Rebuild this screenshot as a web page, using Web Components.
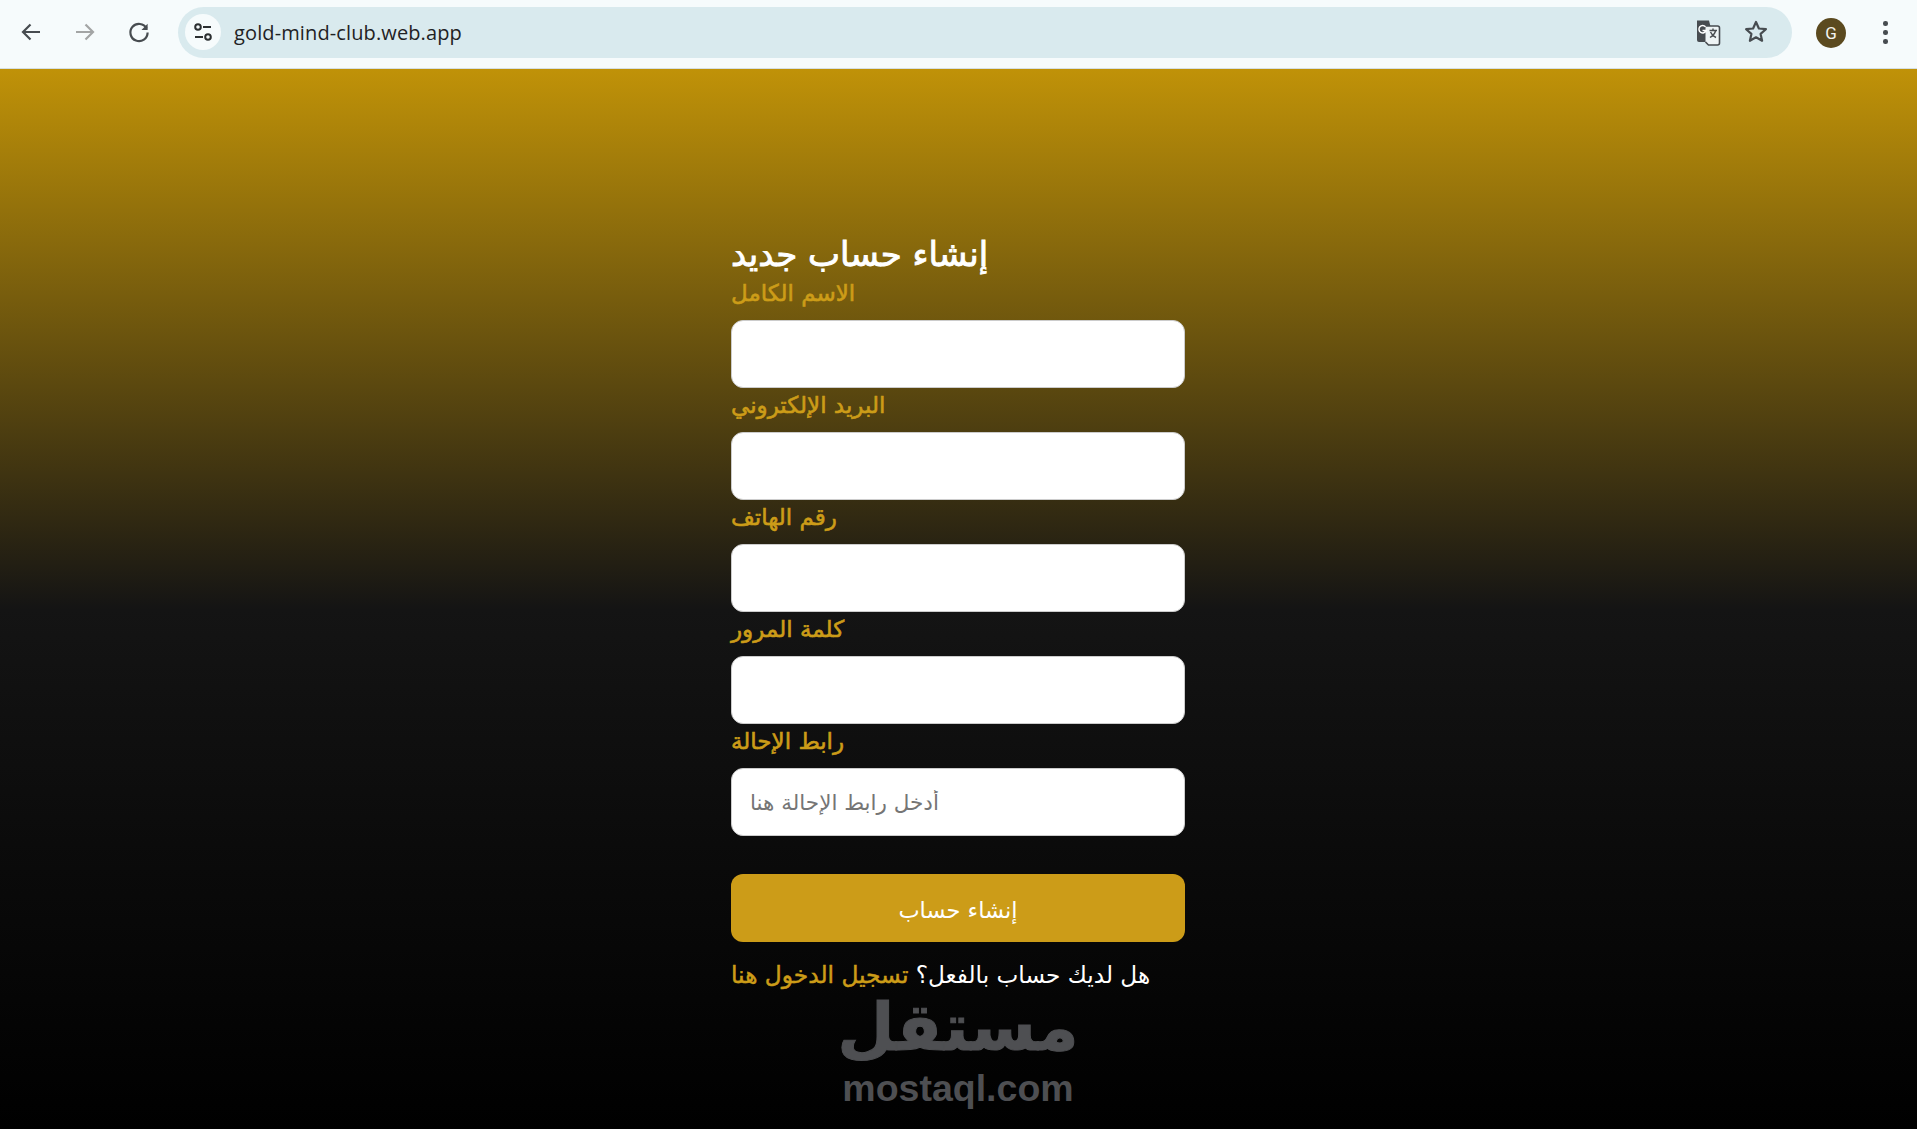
<!DOCTYPE html>
<html lang="ar">
<head>
<meta charset="utf-8">
<title>gold-mind-club</title>
<style>
  html, body { margin: 0; height: 100%; overflow: hidden; }
  body { display: flex; flex-direction: column; font-family: "DejaVu Sans", sans-serif; }
  signup-page { flex: 1; }
</style>
</head>
<body>
<browser-bar url="gold-mind-club.web.app"></browser-bar>
<signup-page>
  <signup-form heading="إنشاء حساب جديد">
    <form-field label="الاسم الكامل"></form-field>
    <form-field label="البريد الإلكتروني"></form-field>
    <form-field label="رقم الهاتف"></form-field>
    <form-field label="كلمة المرور"></form-field>
    <form-field label="رابط الإحالة" placeholder="أدخل رابط الإحالة هنا"></form-field>
    <button slot="actions">إنشاء حساب</button>
  </signup-form>
  <mostaql-mark></mostaql-mark>
</signup-page>
<script>
// toolbar on top of the page
const barTemplate = document.createElement('template');
barTemplate.innerHTML = `
  <style>
    :host { display: flex; align-items: center; box-sizing: border-box; height: 69px; padding-bottom: 4px; background: #f6fbfc; border-bottom: 1px solid #d5dfe2; }
    .nav { display: flex; width: 178px; box-sizing: border-box; padding-left: 16px; gap: 24px; flex: none; }
    .nav svg { display: block; width: 30px; height: 30px; }
    .pill { flex: none; width: 1614px; height: 51px; box-sizing: border-box; display: flex; align-items: center; padding: 0 21px 0 7px; background: #d9eaee; border-radius: 26px; }
    .tune { width: 36px; height: 36px; border-radius: 50%; background: #f6fbfc; display: flex; align-items: center; justify-content: center; flex: none; margin-right: 13px; }
    .url { flex: 1; font: 20px "Open Sans", sans-serif; color: #1f2224; letter-spacing: 0.12px; }
    .tools { display: flex; gap: 18px; align-items: center; }
    .avatar { width: 30px; height: 30px; margin-top: 1px; border-radius: 50%; background: #5b4a1f; color: #f4f4f0; font: 17px/30px Roboto, sans-serif; text-align: center; margin-left: 24px; flex: none; }
    .dots { margin: 1px 0 0 37px; width: 4px; display: flex; flex-direction: column; gap: 4.5px; flex: none; }
    .dots i { display: block; width: 4.5px; height: 4.5px; border-radius: 50%; background: #474c50; }
  </style>
  <div class="nav">
    <svg viewBox="0 0 30 30" fill="none" stroke="#474c50" stroke-width="2.2"><path d="M24 15H7.5M14.5 7.500 7 15l7.500 7.500"/></svg>
    <svg viewBox="0 0 30 30" fill="none" stroke="#a3a5a5" stroke-width="2.2"><path d="M6 15h16.500M15.500 7.500 23 15l-7.500 7.500"/></svg>
    <svg viewBox="0 0 30 30" fill="none" stroke="#474c50" stroke-width="2.2"><path d="M22.600 11.500A8.600 8.600 0 1 0 23.600 15.500"/><path d="M23.600 6.800v6.100h-6.100z" stroke="none" fill="#474c50"/></svg>
  </div>
  <div class="pill">
    <span class="tune">
      <svg width="22" height="22" viewBox="0 0 22 22" fill="none" stroke="#2b2f31" stroke-width="2"><circle cx="6" cy="6" r="2.800"/><path d="M11 6h8M3 16h8"/><circle cx="16" cy="16" r="2.800"/></svg>
    </span>
    <span class="url"></span>
    <div class="tools">
      <svg width="30" height="30" viewBox="0 0 30 30"><path d="M4 3.500h12l5.500 21.500H6a2 2 0 0 1-2-2z" fill="#474c50"/><path d="M12.500 9h12a2 2 0 0 1 2 2v15a2 2 0 0 1-2 2H15.500l-3-3" fill="#eef4f5" stroke="#474c50" stroke-width="1.600"/><path d="M16.500 13.500h7.500M20 11.500v2M22.500 14c-.8 3-3 5-5.500 6.500M17.500 15c.8 2 2.500 4 5.500 5.500" fill="none" stroke="#474c50" stroke-width="1.400"/><path d="M12.500 9.800a3.700 3.700 0 1 0 .6 3.800H9.500" fill="none" stroke="#fff" stroke-width="1.500"/></svg>
      <svg width="30" height="30" viewBox="0 0 30 30" fill="none" stroke="#474c50" stroke-width="2.200" stroke-linejoin="round"><path d="m15 5 2.900 6.500 7 .7-5.300 4.700 1.500 6.900L15 20.300l-6.100 3.500 1.500-6.900-5.300-4.700 7-.7z"/></svg>
    </div>
  </div>
  <span class="avatar">G</span>
  <div class="dots"><i></i><i></i><i></i></div>
`;
class BrowserBar extends HTMLElement {
  constructor() {
    super();
    this.attachShadow({ mode: 'open' });
    this.shadowRoot.appendChild(barTemplate.content.cloneNode(true));
    this.shadowRoot.querySelector('.url').textContent = this.getAttribute('url');
  }
}
customElements.define('browser-bar', BrowserBar);

// gradient canvas
const pageTemplate = document.createElement('template');
pageTemplate.innerHTML = `
  <style>
    :host { display: flex; justify-content: center; position: relative; box-sizing: border-box; padding: 164px 1px 0 0; background: linear-gradient(180deg, #c09208 0%, #141414 51%, #000 100%); }
  </style>
  <slot></slot>
`;
class SignupPage extends HTMLElement {
  constructor() {
    super();
    this.attachShadow({ mode: 'open' });
    this.shadowRoot.appendChild(pageTemplate.content.cloneNode(true));
  }
}
customElements.define('signup-page', SignupPage);

const formTemplate = document.createElement('template');
formTemplate.innerHTML = `
  <style>
    :host { display: block; width: 454px; font-family: "DejaVu Sans", sans-serif; }
    h2 { margin: 0; font-size: 34px; line-height: 43px; font-weight: 400; color: #fff; -webkit-text-stroke: 0.9px #fff; }
    ::slotted(button) { display: block; width: 100%; height: 68px; margin-top: 38px; padding: 4px 0 0; border: 0; border-radius: 12px; background: #cc9c18; color: #fff; font: 22.5px "DejaVu Sans", sans-serif; }
    .foot { margin: 17px 0 0; font-size: 23.2px; line-height: 32px; color: #fff; white-space: nowrap; }
    a { color: #cc9c18; font-size: 23.3px; -webkit-text-stroke: 0.5px #cc9c18; text-decoration: none; }
  </style>
  <h2></h2>
  <slot></slot>
  <slot name="actions"></slot>
  <p class="foot">هل لديك حساب بالفعل؟ <a href="#">تسجيل الدخول هنا</a></p>
`;
class SignupForm extends HTMLElement {
  constructor() {
    super();
    this.attachShadow({ mode: 'open' });
    this.shadowRoot.appendChild(formTemplate.content.cloneNode(true));
    this.shadowRoot.querySelector('h2').textContent = this.getAttribute('heading');
  }
}
customElements.define('signup-form', SignupForm);

const fieldTemplate = document.createElement('template');
fieldTemplate.innerHTML = `
  <style>
    :host { display: block; }
    label { display: block; height: 44px; font-size: 23px; line-height: 34px; color: #cc9c18; -webkit-text-stroke: 0.6px #cc9c18; white-space: nowrap; }
    input { display: block; width: 100%; height: 68px; box-sizing: border-box; padding: 0 18px; border: 1px solid #ccc; border-radius: 12px; background: #fff; font: 21.5px "DejaVu Sans", sans-serif; text-align: left; outline: 0; }
    input::placeholder { color: #757575; }
  </style>
  <label></label>
  <input type="text">
`;
class FormField extends HTMLElement {
  constructor() {
    super();
    this.attachShadow({ mode: 'open' });
    this.shadowRoot.appendChild(fieldTemplate.content.cloneNode(true));
    this.shadowRoot.querySelector('label').textContent = this.getAttribute('label');
    if (this.hasAttribute('placeholder')) this.shadowRoot.querySelector('input').placeholder = this.getAttribute('placeholder');
  }
}
customElements.define('form-field', FormField);

// site watermark, sits over the page
const markTemplate = document.createElement('template');
markTemplate.innerHTML = `
  <style>
    :host { position: absolute; left: 818px; top: 925px; width: 280px; color: #4e4f52; text-align: center; font-weight: 700; }
    .ar { font: 700 66px/68px "DejaVu Sans", sans-serif; -webkit-text-stroke: 1px #4e4f52; }
    .en { margin-top: 7px; font: 700 37.5px/38px "Liberation Sans", sans-serif; }
  </style>
  <div class="ar">مستقل</div>
  <div class="en">mostaql.com</div>
`;
class MostaqlMark extends HTMLElement {
  constructor() {
    super();
    this.attachShadow({ mode: 'open' });
    this.shadowRoot.appendChild(markTemplate.content.cloneNode(true));
  }
}
customElements.define('mostaql-mark', MostaqlMark);
</script>
</body>
</html>
